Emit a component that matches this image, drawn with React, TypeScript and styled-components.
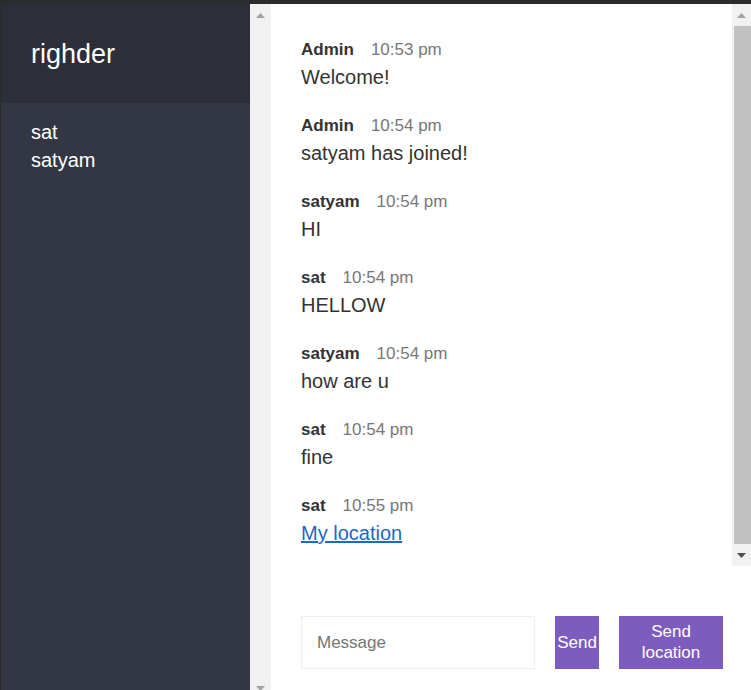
import React from "react";
import styled, { createGlobalStyle } from "styled-components";

const GlobalStyle = createGlobalStyle`
  html, body {
    margin: 0;
    padding: 0;
    background: #2e2e2f;
    overflow: hidden;
  }
  body {
    font-family: "Liberation Sans", Arial, sans-serif;
  }
  * { box-sizing: border-box; }
`;

const Page = styled.div`
  display: flex;
  align-items: flex-start;
  height: 690px;
  padding: 4px 0 0 1px;
  overflow: hidden;
  background: #2b2b2c;
`;

const Sidebar = styled.aside`
  display: flex;
  width: 270px;
  height: 695px;
  flex-shrink: 0;
`;

const SidebarBody = styled.div`
  flex: 1;
  display: flex;
  flex-direction: column;
  background: #333744;
  color: #ffffff;
`;

const RoomTitle = styled.h2`
  margin: 0;
  height: 99px;
  display: flex;
  align-items: center;
  padding: 2px 0 0 30px;
  background: #2c2f3a;
  font-size: 27px;
  font-weight: 400;
`;

const UserList = styled.ul`
  list-style: none;
  margin: 0;
  padding: 15px 30px 0 30px;
  font-size: 20px;
  line-height: 28px;
`;

const Track = styled.div<{ $w: number }>`
  width: ${(p) => p.$w}px;
  flex-shrink: 0;
  display: flex;
  flex-direction: column;
  background: #f1f1f1;
`;

const ArrowButton = styled.div`
  height: 22px;
  display: flex;
  align-items: center;
  justify-content: center;
  flex-shrink: 0;
`;

const Thumb = styled.div`
  flex: 1;
  margin-left: 2px;
  background: #c1c1c1;
`;

const Spacer = styled.div`
  flex: 1;
`;

const Arrow = ({ up, color }: { up?: boolean; color: string }) => (
  <svg width="9" height="5" viewBox="0 0 9 5">
    {up ? (
      <polygon points="4.5,0 9,5 0,5" fill={color} />
    ) : (
      <polygon points="0,0 9,0 4.5,5" fill={color} />
    )}
  </svg>
);

const Scrollbar = ({
  width,
  thumb,
  upColor,
  downColor,
}: {
  width: number;
  thumb?: boolean;
  upColor: string;
  downColor: string;
}) => (
  <Track $w={width}>
    <ArrowButton>
      <Arrow up color={upColor} />
    </ArrowButton>
    {thumb ? <Thumb /> : <Spacer />}
    <ArrowButton>
      <Arrow color={downColor} />
    </ArrowButton>
  </Track>
);

const Main = styled.main`
  flex: 1;
  height: 686px;
  display: flex;
  flex-direction: column;
  background: #ffffff;
`;

const MessagesRow = styled.div`
  height: 562px;
  display: flex;
  flex-shrink: 0;
`;

const MessageList = styled.div`
  flex: 1;
  padding: 36px 30px 0 30px;
  color: #333333;
  overflow: hidden;
`;

const Message = styled.div`
  margin-bottom: 27px;
`;

const Meta = styled.div`
  font-size: 17px;
  line-height: 20px;
  display: flex;
`;

const Name = styled.span`
  font-weight: 700;
  color: #333333;
  margin-right: 17px;
`;

const Time = styled.span`
  color: #777777;
`;

const Body = styled.p`
  margin: 5px 0 0 0;
  font-size: 20px;
  line-height: 24px;
`;

const Link = styled.a`
  color: #1d68c6;
  text-decoration: underline;
`;

const Compose = styled.form`
  display: flex;
  align-items: stretch;
  gap: 20px;
  padding: 50px 28px 0 30px;
`;

const Input = styled.input`
  width: 234px;
  height: 53px;
  border: 1px solid #eeeeee;
  padding: 0 15px;
  font-family: "Liberation Sans", Arial, sans-serif;
  font-size: 17px;
  color: #333;
  outline: none;
  &::placeholder {
    color: #757575;
  }
`;

const Button = styled.button<{ $w: number; $pad: number }>`
  width: ${(p) => p.$w}px;
  height: 53px;
  padding: 0 ${(p) => p.$pad}px 1px;
  border: none;
  background: #7c5cbf;
  color: #ffffff;
  font-family: "Liberation Sans", Arial, sans-serif;
  font-size: 17px;
  line-height: 21px;
  text-align: center;
  white-space: normal;
`;

const messages = [
  { name: "Admin", time: "10:53 pm", text: "Welcome!" },
  { name: "Admin", time: "10:54 pm", text: "satyam has joined!" },
  { name: "satyam", time: "10:54 pm", text: "HI" },
  { name: "sat", time: "10:54 pm", text: "HELLOW" },
  { name: "satyam", time: "10:54 pm", text: "how are u" },
  { name: "sat", time: "10:54 pm", text: "fine" },
  { name: "sat", time: "10:55 pm", text: "My location", link: true },
];

export default function App() {
  return (
    <>
      <GlobalStyle />
      <Page>
        <Sidebar>
          <SidebarBody>
            <RoomTitle>righder</RoomTitle>
            <UserList>
              <li>sat</li>
              <li>satyam</li>
            </UserList>
          </SidebarBody>
          <Scrollbar width={21} upColor="#a3a3a3" downColor="#a3a3a3" />
        </Sidebar>
        <Main>
          <MessagesRow>
            <MessageList>
              {messages.map((m, i) => (
                <Message key={i}>
                  <Meta>
                    <Name>{m.name}</Name>
                    <Time>{m.time}</Time>
                  </Meta>
                  <Body>
                    {m.link ? <Link href="#">{m.text}</Link> : m.text}
                  </Body>
                </Message>
              ))}
            </MessageList>
            <Scrollbar width={19} thumb upColor="#a3a3a3" downColor="#505050" />
          </MessagesRow>
          <Compose onSubmit={(e) => e.preventDefault()}>
            <Input placeholder="Message" />
            <Button $w={44} $pad={0} type="button">Send</Button>
            <Button $w={104} $pad={14} type="button">Send location</Button>
          </Compose>
        </Main>
      </Page>
    </>
  );
}
